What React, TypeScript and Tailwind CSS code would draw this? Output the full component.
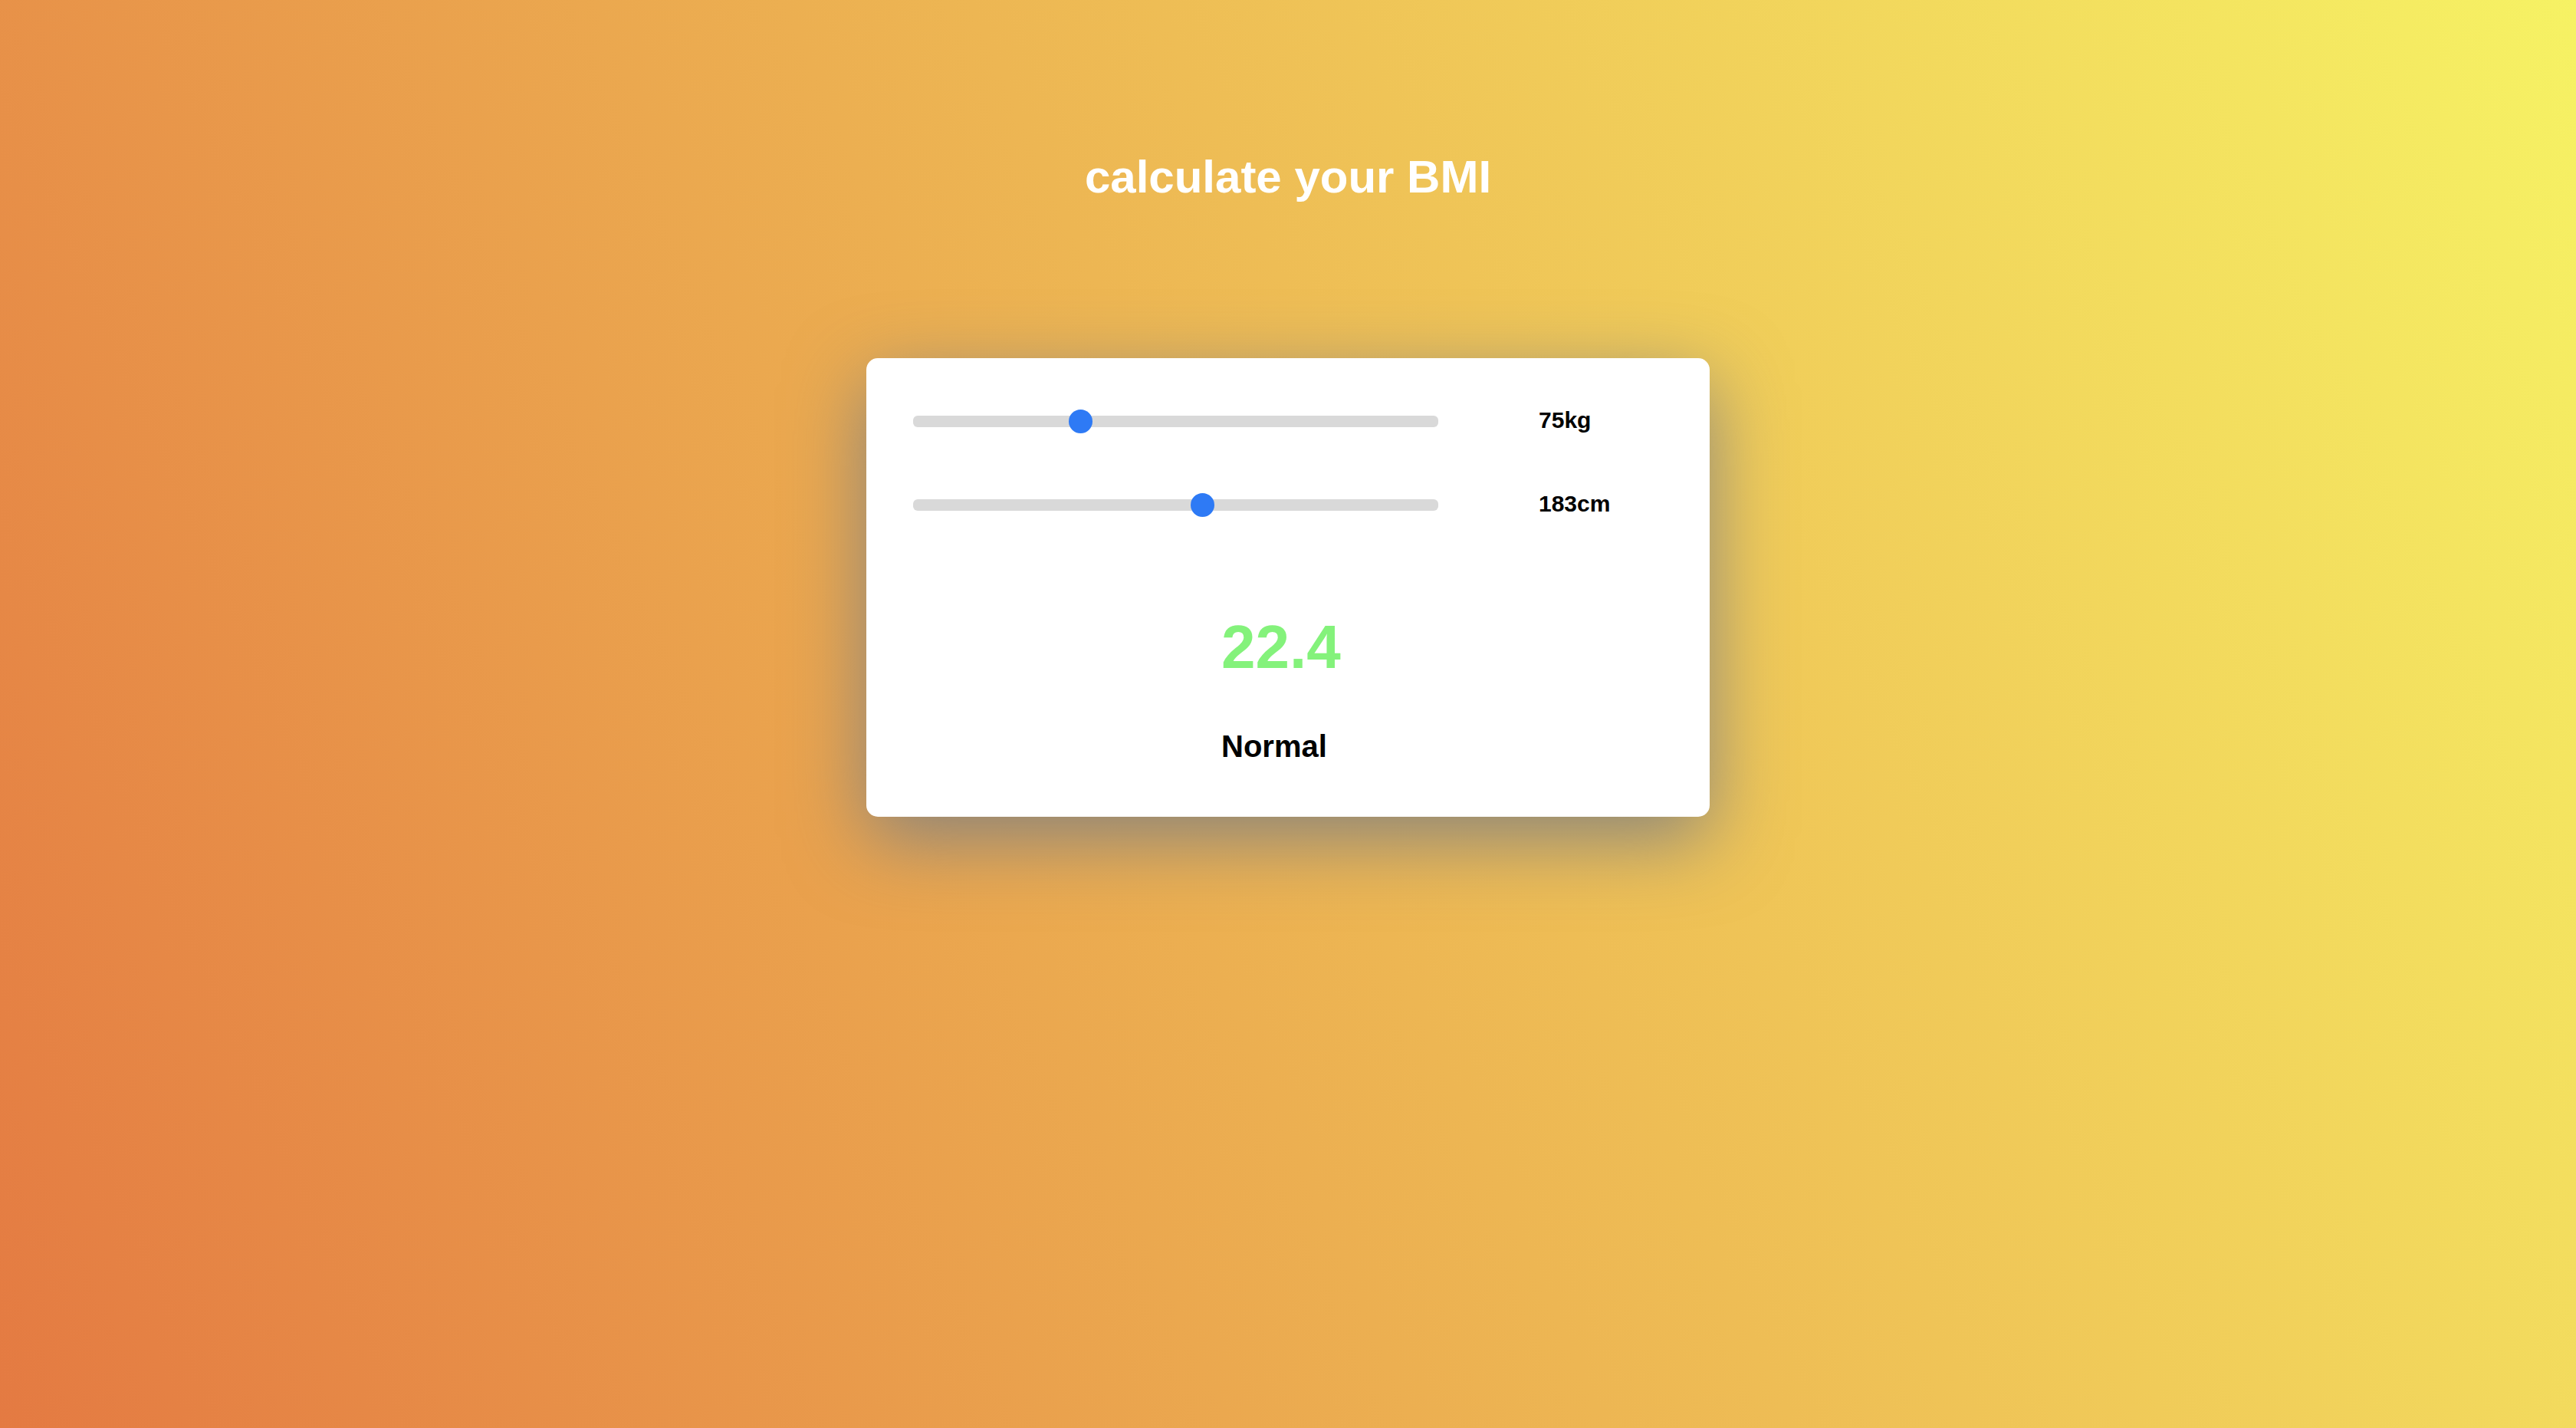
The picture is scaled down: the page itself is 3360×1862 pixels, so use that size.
import React, { useState } from "react";

const sliderClass =
  "h-[15px] w-[685px] cursor-pointer appearance-none rounded-[6px] bg-[#d9d9d9] outline-none [&::-webkit-slider-thumb]:h-[31px] [&::-webkit-slider-thumb]:w-[31px] [&::-webkit-slider-thumb]:appearance-none [&::-webkit-slider-thumb]:rounded-full [&::-webkit-slider-thumb]:bg-[#2e7af5]";

const getCategory = (bmi: number) => {
  if (bmi < 18.5) return { label: "Underweight", color: "text-[#f5c542]" };
  if (bmi < 25) return { label: "Normal", color: "text-[#84f27b]" };
  if (bmi < 30) return { label: "Overweight", color: "text-[#f59e42]" };
  return { label: "Obese", color: "text-[#f05a4a]" };
};

const App = () => {
  const [weight, setWeight] = useState(75);
  const [height, setHeight] = useState(183);

  const bmi = weight / Math.pow(height / 100, 2);
  const category = getCategory(bmi);

  return (
    <div className="flex h-[1862px] w-full flex-col items-center bg-[linear-gradient(66deg,#e47a42,#f6f264)] font-['Liberation_Sans',Arial,sans-serif]">
      <h1 className="pt-[201px] text-[60px] leading-[60px] font-bold text-white">
        calculate your BMI
      </h1>

      <div className="mt-[206px] flex w-[1100px] flex-col rounded-[15px] bg-white pt-[67px] pb-[72px] pl-[61px] shadow-[0_30px_100px_rgba(128,128,128,0.9)]">
        <div className="flex h-[31px] items-center gap-[131px]">
          <input
            type="range"
            min={30}
            max={175}
            value={weight}
            onChange={(e) => setWeight(Number(e.target.value))}
            className={sliderClass}
          />
          <span className="-mt-[5px] text-[30px] leading-[31px] font-bold text-black">
            {weight}kg
          </span>
        </div>

        <div className="mt-[78px] flex h-[31px] items-center gap-[131px]">
          <input
            type="range"
            min={100}
            max={250}
            value={height}
            onChange={(e) => setHeight(Number(e.target.value))}
            className={sliderClass}
          />
          <span className="-mt-[5px] text-[30px] leading-[31px] font-bold text-black">
            {height}cm
          </span>
        </div>

        <div className="mt-[130px] ml-[402px] flex flex-col items-start">
          <div className={`text-[80px] leading-[80px] font-bold ${category.color}`}>
            {bmi.toFixed(1)}
          </div>
          <div className="mt-[69px] text-[40px] leading-[40px] font-bold text-black">
            {category.label}
          </div>
        </div>
      </div>
    </div>
  );
};

export default App;
